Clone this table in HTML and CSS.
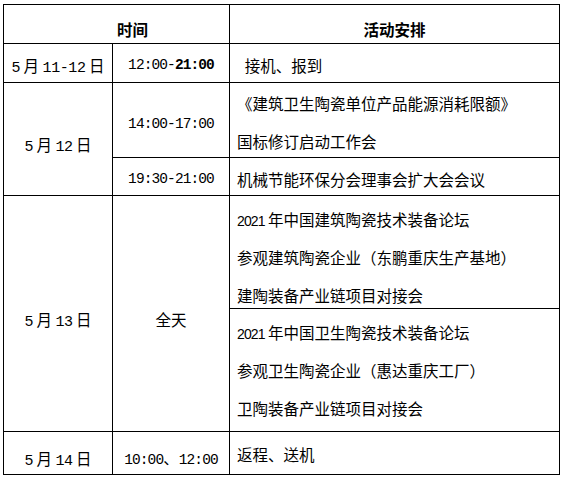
FILE: index.html
```html
<!DOCTYPE html>
<html lang="zh-CN">
<head>
<meta charset="utf-8">
<title>活动安排</title>
<link rel="stylesheet" href="styles.css">
</head>
<body>
<div class="schedule">
  <div class="cell head span-cols p9 shift-head"><div class="line">时间</div></div>
  <div class="cell head p9"><div class="line">活动安排</div></div>

  <div class="cell center p4"><div class="line"><span class="dg1">5</span> 月 <span class="dg1">11-12</span> 日</div></div>
  <div class="cell center p4"><div class="line mono">12:00-<b>21:00</b></div></div>
  <div class="cell left p4"><div class="line">&#8194;接机、报到</div></div>

  <div class="cell center span-rows p10"><div class="line"><span class="dg1">5</span> 月 <span class="dg1">12</span> 日</div></div>
  <div class="cell center p8"><div class="line mono">14:00-17:00</div></div>
  <div class="cell left p4">
    <div class="line">《建筑卫生陶瓷单位产品能源消耗限额》</div>
    <div class="line">国标修订启动工作会</div>
  </div>
  <div class="cell center p5"><div class="line mono">19:30-21:00</div></div>
  <div class="cell left p5"><div class="line">机械节能环保分会理事会扩大会会议</div></div>

  <div class="cell center span-rows p10"><div class="line"><span class="dg1">5</span> 月 <span class="dg1">13</span> 日</div></div>
  <div class="cell center span-rows p10"><div class="line">全天</div></div>
  <div class="cell left p10">
    <div class="line"><span class="yr">2021</span> 年中国建筑陶瓷技术装备论坛</div>
    <div class="line">参观建筑陶瓷企业（东鹏重庆生产基地）</div>
    <div class="line">建陶装备产业链项目对接会</div>
  </div>
  <div class="cell left p0">
    <div class="line"><span class="yr">2021</span> 年中国卫生陶瓷技术装备论坛</div>
    <div class="line">参观卫生陶瓷企业（惠达重庆工厂）</div>
    <div class="line">卫陶装备产业链项目对接会</div>
  </div>

  <div class="cell center p10"><div class="line"><span class="dg1">5</span> 月 <span class="dg1">14</span> 日</div></div>
  <div class="cell center p7"><div class="line mono">10:00<span class="cjk">、</span>12:00</div></div>
  <div class="cell left p1"><div class="line">返程、送机</div></div>
</div>
</body>
</html>
```
FILE: styles.css
```css
html, body {
  margin: 0;
  padding: 0;
  background: #ffffff;
}

body {
  font-family: "Noto Sans CJK SC", "Noto Sans", sans-serif;
  font-size: 15.5px;
  color: #000000;
}

.schedule {
  display: grid;
  width: max-content;
  margin: 4px 0 0 3px;
  padding: 1px;
  gap: 1px;
  background: #000000;
  grid-template-columns: 108px 116px 329px;
  grid-template-rows: 38px 38px 74px 37px 112px 122px 42px;
}

.cell {
  background: #ffffff;
  display: flex;
  flex-direction: column;
  justify-content: center;
  white-space: nowrap;
  box-sizing: border-box;
  overflow: hidden;
}

.span-cols { grid-column: span 2; }
.span-rows { grid-row: span 2; }

.head {
  font-weight: 700;
  align-items: center;
}

.shift-head { padding-left: 32px; }

.center { align-items: center; }

.left {
  align-items: flex-start;
  padding-left: 7px;
}

.line {
  line-height: 38px;
  height: 38px;
  flex: none;
}

.mono {
  font-family: "Liberation Mono", "DejaVu Sans Mono", monospace;
  font-size: 14.5px;
  letter-spacing: -0.9px;
}

.mono b {
  font-weight: 700;
}

.cjk {
  font-family: "Noto Sans CJK SC", sans-serif;
  font-size: 15.5px;
  letter-spacing: 0;
}

.dg1 {
  font-family: "Liberation Mono", "DejaVu Sans Mono", monospace;
  font-size: 15px;
  letter-spacing: -0.4px;
}

.yr {
  font-family: "Liberation Sans", Arial, sans-serif;
  font-size: 14px;
  letter-spacing: -0.9px;
}

.p0 { padding-top: 0; }
.p1 { padding-top: 1px; }
.p4 { padding-top: 4px; }
.p5 { padding-top: 5px; }
.p7 { padding-top: 7px; }
.p8 { padding-top: 8px; }
.p9 { padding-top: 9px; }
.p10 { padding-top: 10px; }
```
